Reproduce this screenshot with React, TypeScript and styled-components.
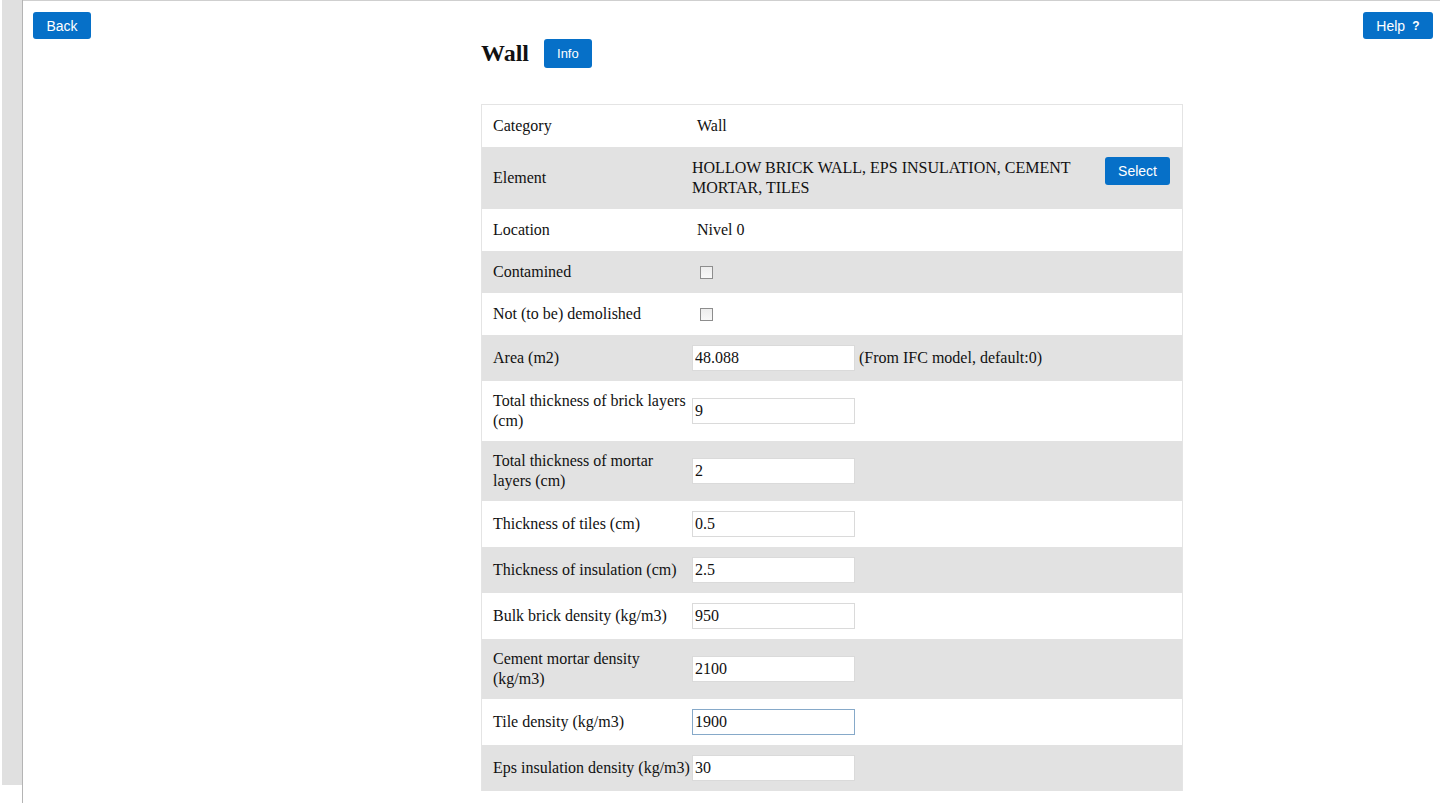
import React from 'react';
import styled, { createGlobalStyle } from 'styled-components';

const GlobalStyle = createGlobalStyle`
	html, body {
		margin: 0;
		padding: 0;
		background: #fff;
	}
	body {
		font-family: 'Liberation Serif', 'Times New Roman', serif;
		color: #111;
	}
`;

const Page = styled.div`
	display: flex;
	min-height: 803px;
	padding-left: 2px;
`;

const SideRail = styled.div`
	width: 20px;
	border-right: 1px solid #b4b4b4;
	display: flex;
	flex-direction: column;
`;

const RailFill = styled.div`
	height: 785px;
	background: #e0e0e0;
`;

const Main = styled.div`
	flex: 1;
	border-top: 1px solid #cfcfcf;
`;

const TopBar = styled.div`
	display: flex;
	justify-content: space-between;
	align-items: flex-start;
	padding: 11px 7px 0 10px;
`;

const Button = styled.button<{ $size?: 'sm' | 'md' }>`
	display: inline-flex;
	align-items: center;
	justify-content: center;
	gap: 7px;
	height: ${(p) => (p.$size === 'sm' ? '29px' : '27px')};
	padding: 0 ${(p) => (p.$size === 'sm' ? '13px' : '13.5px')};
	border: none;
	border-radius: 3px;
	background: #0670c8;
	color: #fff;
	font-family: 'Liberation Sans', Arial, sans-serif;
	font-size: ${(p) => (p.$size === 'sm' ? '13px' : '14px')};
	cursor: pointer;
`;

const SelectButton = styled(Button)`
	height: 28px;
	margin-top: -1px;
	padding: 0 13px;
`;

const HelpMark = styled.span`
	font-weight: bold;
	font-size: 12px;
`;

const Content = styled.div`
	margin-left: 458px;
	width: 702px;
`;

const TitleRow = styled.div`
	display: flex;
	align-items: center;
	gap: 15px;
	height: 29px;
`;

const Title = styled.h2`
	margin: 0;
	font-size: 24px;
	font-weight: bold;
	line-height: 29px;
`;

const Table = styled.div`
	margin-top: 36px;
	border: 1px solid #e4e4e4;
	border-bottom: none;
`;

const Row = styled.div<{ $shade: boolean }>`
	display: grid;
	grid-template-columns: 208px 1fr;
	align-items: center;
	min-height: 42px;
	background: ${(p) => (p.$shade ? '#e2e2e2' : '#fff')};
`;

const Label = styled.div`
	padding: 10px 2px 10px 11px;
	font-size: 16px;
	line-height: 20px;
	white-space: pre;
`;

const Value = styled.div<{ $indent?: number }>`
	display: flex;
	align-items: center;
	gap: 4px;
	padding: 10px 12px 10px ${(p) => 2 + (p.$indent ?? 0)}px;
	font-size: 16px;
	line-height: 20px;
`;

const ElementValue = styled(Value)`
	align-items: flex-start;
	padding-top: 11px;
	padding-bottom: 11px;
`;

const ElementText = styled.div`
	flex: 1;
	padding-right: 10px;
`;

const Field = styled.input<{ $focused?: boolean }>`
	box-sizing: border-box;
	width: 163px;
	height: 26px;
	margin: 0;
	padding: 0 2px;
	border: 1px solid ${(p) => (p.$focused ? '#86a9c9' : '#dadada')};
	background: #fff;
	font-family: 'Liberation Serif', 'Times New Roman', serif;
	font-size: 16px;
	color: #111;
	outline: none;
`;

const Check = styled.input`
	appearance: none;
	box-sizing: border-box;
	width: 13px;
	height: 13px;
	margin: 0;
	border: 1px solid #8d8d8d;
	background: linear-gradient(#ededed, #f8f8f8);
`;

const Note = styled.span`
	font-size: 16px;
`;

type Entry =
	| { label: string; kind: 'text'; value: string }
	| { label: string; kind: 'element'; value: string }
	| { label: string; kind: 'check' }
	| { label: string; kind: 'input'; value: string; note?: string; focused?: boolean };

const entries: Entry[] = [
	{ label: 'Category', kind: 'text', value: 'Wall' },
	{ label: 'Element', kind: 'element', value: 'HOLLOW BRICK WALL, EPS INSULATION, CEMENT MORTAR, TILES' },
	{ label: 'Location', kind: 'text', value: 'Nivel 0' },
	{ label: 'Contamined', kind: 'check' },
	{ label: 'Not (to be) demolished', kind: 'check' },
	{ label: 'Area (m2)', kind: 'input', value: '48.088', note: '(From IFC model, default:0)' },
	{ label: 'Total thickness of brick layers\n(cm)', kind: 'input', value: '9' },
	{ label: 'Total thickness of mortar\nlayers (cm)', kind: 'input', value: '2' },
	{ label: 'Thickness of tiles (cm)', kind: 'input', value: '0.5' },
	{ label: 'Thickness of insulation (cm)', kind: 'input', value: '2.5' },
	{ label: 'Bulk brick density (kg/m3)', kind: 'input', value: '950' },
	{ label: 'Cement mortar density\n(kg/m3)', kind: 'input', value: '2100' },
	{ label: 'Tile density (kg/m3)', kind: 'input', value: '1900', focused: true },
	{ label: 'Eps insulation density (kg/m3)', kind: 'input', value: '30' },
];

const renderValue = (entry: Entry) => {
	switch (entry.kind) {
		case 'text':
			return <Value $indent={5}>{entry.value}</Value>;
		case 'element':
			return (
				<ElementValue>
					<ElementText>{entry.value}</ElementText>
					<SelectButton>Select</SelectButton>
				</ElementValue>
			);
		case 'check':
			return (
				<Value $indent={8}>
					<Check type="checkbox" />
				</Value>
			);
		default:
			return (
				<Value>
					<Field defaultValue={entry.value} $focused={entry.focused} />
					{entry.note && <Note>{entry.note}</Note>}
				</Value>
			);
	}
};

const App = () => {
	return (
		<>
			<GlobalStyle />
			<Page>
				<SideRail>
					<RailFill />
				</SideRail>
				<Main>
					<TopBar>
						<Button>Back</Button>
						<Button>
							Help <HelpMark>?</HelpMark>
						</Button>
					</TopBar>
					<Content>
						<TitleRow>
							<Title>Wall</Title>
							<Button $size="sm">Info</Button>
						</TitleRow>
						<Table>
							{entries.map((entry, idx) => (
								<Row key={idx} $shade={idx % 2 === 1}>
									<Label>{entry.label}</Label>
									{renderValue(entry)}
								</Row>
							))}
						</Table>
					</Content>
				</Main>
			</Page>
		</>
	);
};

export default App;
